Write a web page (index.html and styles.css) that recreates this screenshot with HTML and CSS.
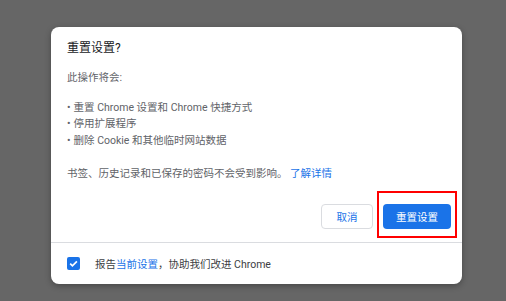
FILE: index.html
```html
<!DOCTYPE html>
<html lang="zh-CN">
<head>
<meta charset="utf-8">
<link rel="stylesheet" href="styles.css">
</head>
<body>
<div class="dialog">
  <div class="title">重置设置?</div>
  <div class="content">
    <p class="lead">此操作将会:</p>
    <ul class="list">
      <li>重置 Chrome 设置和 Chrome 快捷方式</li>
      <li>停用扩展程序</li>
      <li>删除 Cookie 和其他临时网站数据</li>
    </ul>
    <p class="note">书签、历史记录和已保存的密码不会受到影响。 <a class="link" href="#">了解详情</a></p>
  </div>
  <div class="actions">
    <button class="btn btn-cancel">取消</button>
    <button class="btn btn-primary">重置设置<span class="highlight"></span></button>
  </div>
  <div class="footer">
    <span class="checkbox">
      <svg width="13" height="13" viewBox="0 0 13 13"><rect width="13" height="13" rx="2" fill="#1a73e8"/><path d="M3.2 6.7 L5.4 8.9 L9.9 4.3" fill="none" stroke="#fff" stroke-width="1.7"/></svg>
    </span>
    <span class="footer-text">报告<a class="link" href="#">当前设置</a>，协助我们改进 Chrome</span>
  </div>
</div>
</body>
</html>
```
FILE: styles.css
```css
html, body {
  margin: 0;
  padding: 0;
}
body {
  background: #666666;
  width: 506px;
  height: 301px;
  padding: 27px 0 0 51px;
  box-sizing: border-box;
  font-family: Roboto, "Noto Sans CJK SC", sans-serif;
  overflow: hidden;
}
.dialog {
  width: 411px;
  height: 257px;
  background: #fff;
  border-radius: 8px;
  box-shadow: 0 2px 6px rgba(0,0,0,0.3);
  display: flex;
  flex-direction: column;
  box-sizing: border-box;
}
.title {
  padding: 13px 16px 0;
  font-size: 12px;
  line-height: 16px;
  color: #202124;
}
.content {
  padding: 0 16px;
  font-size: 10.5px;
  line-height: 16.5px;
  color: #5f6368;
}
.lead {
  margin: 14px 0 0;
}
.list {
  margin: 13px 0 0;
  padding: 0;
  list-style: none;
}
.list li::before {
  content: "•";
  margin-right: 3px;
}
.note {
  margin: 17px 0 0;
}
.link {
  color: #1a73e8;
  text-decoration: none;
}
.actions {
  display: flex;
  justify-content: flex-end;
  gap: 10px;
  padding: 0 11px 0 0;
  margin-top: 21px;
}
.btn {
  height: 25px;
  border-radius: 4px;
  font-family: Roboto, "Noto Sans CJK SC", sans-serif;
  font-size: 10.5px;
  padding: 0;
  box-sizing: border-box;
}
.btn-cancel {
  width: 52px;
  background: #fff;
  border: 1px solid #dadce0;
  color: #1a73e8;
}
.btn-primary {
  width: 68px;
  background: #1a73e8;
  border: none;
  color: #fff;
  position: relative;
}
.highlight {
  position: absolute;
  left: -6px;
  right: -6px;
  top: -13px;
  bottom: -9px;
  border: 2.5px solid #ff0000;
}
.footer {
  margin-top: auto;
  height: 42px;
  border-top: 1px solid #dadce0;
  display: flex;
  align-items: center;
  padding-left: 16px;
  box-sizing: border-box;
  font-size: 10.5px;
  color: #3c4043;
}
.checkbox {
  display: flex;
  width: 13px;
  height: 13px;
  margin-right: 15px;
}
```
